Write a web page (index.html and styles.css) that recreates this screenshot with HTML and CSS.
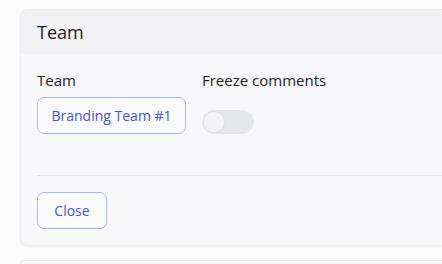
FILE: index.html
```html
<!DOCTYPE html>
<html>
<head>
<meta charset="utf-8">
<link rel="stylesheet" href="styles.css">
</head>
<body>
<div class="page">
  <section class="card">
    <header class="card-header">Team</header>
    <div class="card-body">
      <div class="fields">
        <div class="field">
          <div class="label">Team</div>
          <button class="btn btn-team">Branding Team #1</button>
        </div>
        <div class="field">
          <div class="label">Freeze comments</div>
          <div class="toggle"><span class="knob"></span></div>
        </div>
      </div>
    </div>
    <div class="card-footer">
      <button class="btn btn-close">Close</button>
    </div>
  </section>
  <section class="card card-next"></section>
</div>
</body>
</html>
```
FILE: styles.css
```css
* { box-sizing: border-box; }
html, body { margin: 0; padding: 0; }
body {
  background: #fcfcfc;
  font-family: "Open Sans", "Noto Sans", sans-serif;
  color: #1f2128;
  width: 442px;
  height: 264px;
  overflow: hidden;
}
.page {
  padding: 9px 0 0 20px;
  display: flex;
  flex-direction: column;
  gap: 14px;
}
.card {
  width: 422px;
  background: #f8f8fa;
  border: 1px solid #ececef;
  border-right: none;
  border-radius: 8px 0 0 8px;
  box-shadow: 0 1px 3px rgba(0,0,0,0.08);
  overflow: hidden;
}
.card-header {
  height: 44px;
  background: #f2f2f4;
  padding: 9px 16px 0;
  font-size: 18px;
  line-height: 26px;
}
.card-body {
  padding: 16px 0 0 16px;
}
.fields {
  display: flex;
  gap: 16px;
  padding-bottom: 41px;
  border-bottom: 1px solid #e3e3e7;
}
.field {
  display: flex;
  flex-direction: column;
  gap: 6px;
}
.label {
  font-size: 15px;
  line-height: 21px;
}
.btn {
  font-family: inherit;
  background: #fbfbfd;
  border: 1px solid #a3b5fb;
  border-radius: 7px;
  color: #4953d8;
  font-size: 14px;
  height: 37px;
  cursor: pointer;
}
.btn-team { width: 149px; padding: 0; }
.btn-close { width: 70px; padding: 0; }
.toggle {
  margin-top: 13px;
  width: 52px;
  height: 24px;
  border-radius: 12px;
  background: #e5e6ea;
  padding: 1px;
  display: flex;
}
.knob {
  width: 22px;
  height: 22px;
  border-radius: 50%;
  background: #f3f3f6;
  border: 1px solid #e0e1e5;
}
.card-footer {
  padding: 16px;
}
.card-next {
  height: 4px;
  box-shadow: none;
  border-bottom: none;
  border-radius: 8px 0 0 0;
}
```
